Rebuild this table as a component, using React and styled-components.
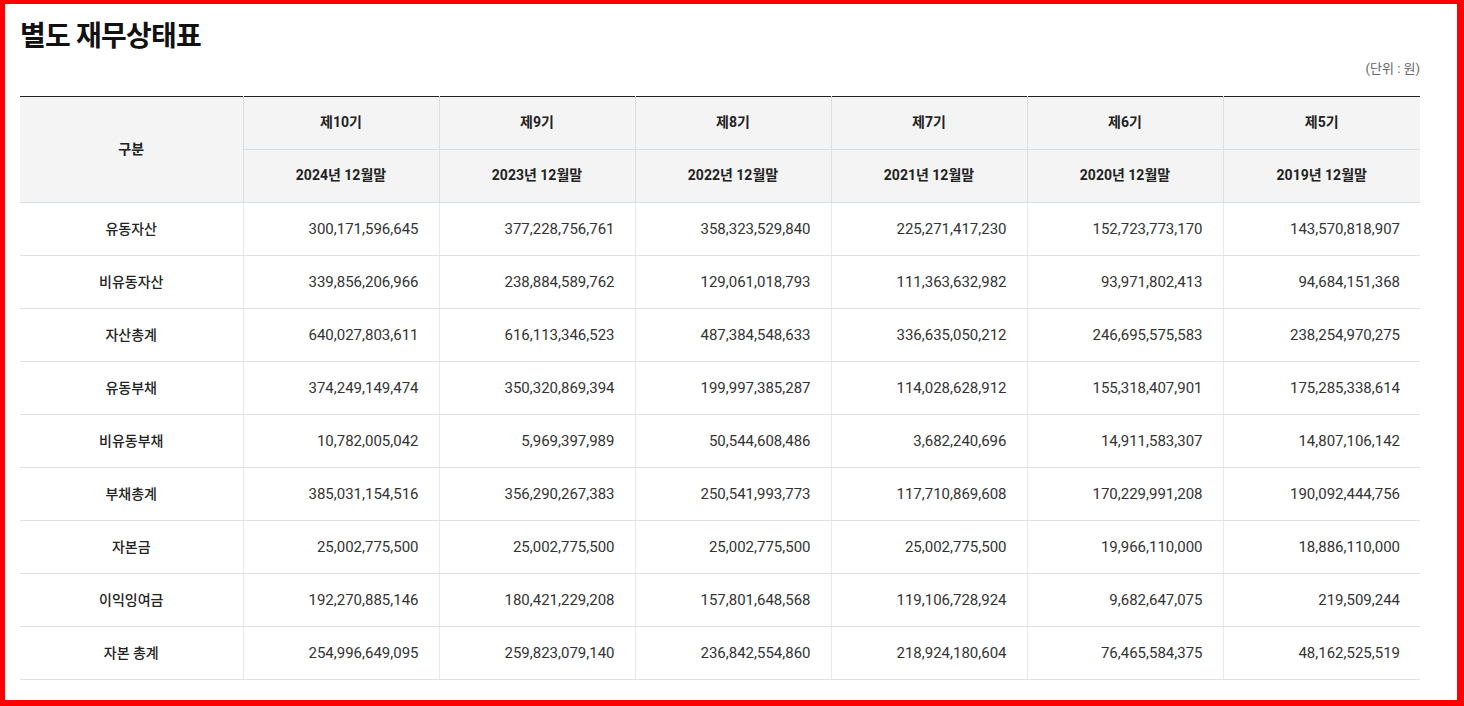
import React from "react";
import styled, { createGlobalStyle } from "styled-components";

const GlobalStyle = createGlobalStyle`
  html, body {
    margin: 0;
    padding: 0;
    background: #fff;
  }
  body {
    font-family: "Roboto", "Noto Sans CJK KR", sans-serif;
    color: #222;
  }
`;

const Frame = styled.div`
  box-sizing: border-box;
  width: 1464px;
  height: 706px;
  border-style: solid;
  border-color: #ff0000;
  border-width: 4px 7px 6px 5px;
  padding: 15px 37px 0 15px;
  overflow: hidden;
`;

const Title = styled.h2`
  margin: 0;
  font-size: 28px;
  line-height: 36px;
  font-weight: 700;
  letter-spacing: -0.8px;
  color: #111;
`;

const Unit = styled.p`
  margin: 5px 0 0;
  text-align: right;
  font-size: 13px;
  line-height: 18px;
  color: #666;
`;

const Table = styled.table`
  margin-top: 18px;
  width: 1400px;
  border-collapse: collapse;
  table-layout: fixed;
  border-top: 1px solid #222;
  font-size: 14px;
`;

const Col = styled.col`
  width: ${(p) => p.$w}px;
`;

const Th = styled.th`
  box-sizing: border-box;
  height: 53px;
  padding: 0 0 4px;
  background: #f4f4f4;
  font-weight: 700;
  color: #222;
  text-align: center;
  border-bottom: 1px solid #d9e0e5;
  border-left: ${(p) => (p.$first ? "none" : "1px solid #d9e0e5")};
`;

const Label = styled.td`
  box-sizing: border-box;
  height: 53px;
  padding: 0 0 2px;
  text-align: center;
  font-weight: 500;
  color: #222;
  border-bottom: 1px solid #dce2e6;
`;

const Amount = styled.td`
  box-sizing: border-box;
  height: 53px;
  padding: 0 20px 0 0;
  text-align: right;
  font-size: 15px;
  font-weight: 400;
  color: #333;
  border-bottom: 1px solid #dce2e6;
  border-left: 1px solid #e8eaec;
`;

const widths = [223, 196, 196, 196, 196, 196, 197];

const periods = [
  { term: "제10기", date: "2024년 12월말" },
  { term: "제9기", date: "2023년 12월말" },
  { term: "제8기", date: "2022년 12월말" },
  { term: "제7기", date: "2021년 12월말" },
  { term: "제6기", date: "2020년 12월말" },
  { term: "제5기", date: "2019년 12월말" },
];

const rows = [
  ["유동자산", "300,171,596,645", "377,228,756,761", "358,323,529,840", "225,271,417,230", "152,723,773,170", "143,570,818,907"],
  ["비유동자산", "339,856,206,966", "238,884,589,762", "129,061,018,793", "111,363,632,982", "93,971,802,413", "94,684,151,368"],
  ["자산총계", "640,027,803,611", "616,113,346,523", "487,384,548,633", "336,635,050,212", "246,695,575,583", "238,254,970,275"],
  ["유동부채", "374,249,149,474", "350,320,869,394", "199,997,385,287", "114,028,628,912", "155,318,407,901", "175,285,338,614"],
  ["비유동부채", "10,782,005,042", "5,969,397,989", "50,544,608,486", "3,682,240,696", "14,911,583,307", "14,807,106,142"],
  ["부채총계", "385,031,154,516", "356,290,267,383", "250,541,993,773", "117,710,869,608", "170,229,991,208", "190,092,444,756"],
  ["자본금", "25,002,775,500", "25,002,775,500", "25,002,775,500", "25,002,775,500", "19,966,110,000", "18,886,110,000"],
  ["이익잉여금", "192,270,885,146", "180,421,229,208", "157,801,648,568", "119,106,728,924", "9,682,647,075", "219,509,244"],
  ["자본 총계", "254,996,649,095", "259,823,079,140", "236,842,554,860", "218,924,180,604", "76,465,584,375", "48,162,525,519"],
];

const App = () => {
  return (
    <>
      <GlobalStyle />
      <Frame>
        <Title>별도 재무상태표</Title>
        <Unit>(단위 : 원)</Unit>
        <Table>
          <colgroup>
            {widths.map((w, i) => (
              <Col key={i} $w={w} />
            ))}
          </colgroup>
          <thead>
            <tr>
              <Th $first rowSpan={2}>
                구분
              </Th>
              {periods.map((p) => (
                <Th key={p.term}>{p.term}</Th>
              ))}
            </tr>
            <tr>
              {periods.map((p) => (
                <Th key={p.date}>{p.date}</Th>
              ))}
            </tr>
          </thead>
          <tbody>
            {rows.map((row) => (
              <tr key={row[0]}>
                <Label>{row[0]}</Label>
                {row.slice(1).map((v, i) => (
                  <Amount key={i}>{v}</Amount>
                ))}
              </tr>
            ))}
          </tbody>
        </Table>
      </Frame>
    </>
  );
};

export default App;
